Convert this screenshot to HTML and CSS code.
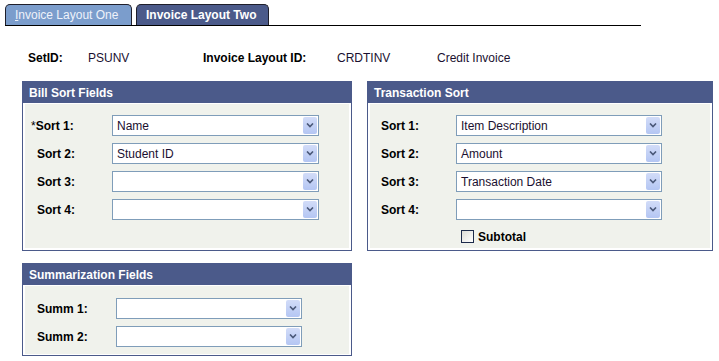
FILE: index.html
```html
<!DOCTYPE html>
<html lang="en">
<head>
  <meta charset="UTF-8">
  <title>Invoice Layout Two</title>
  <link rel="stylesheet" href="styles.css">
</head>
<body>
  <div class="tabs">
    <a class="tab"><u>I</u>nvoice Layout One</a>
    <a class="tab active">Invoice Layout Two</a>
  </div>

  <div class="keys">
    <span class="lbl">SetID:</span>
    <span class="val">PSUNV</span>
    <span class="lbl">Invoice Layout ID:</span>
    <span class="val">CRDTINV</span>
    <span class="val">Credit Invoice</span>
  </div>

  <div class="groups">
    <div class="box bill">
      <div class="box-head">Bill Sort Fields</div>
      <div class="box-body">
        <div class="row"><label><span class="req">*</span>Sort 1:</label><div class="select"><span>Name</span><i class="drop"><svg width="8" height="5" viewBox="0 0 8 5"><path d="M1 0.5 L4 3.5 L7 0.5" fill="none" stroke="#4a5878" stroke-width="1.6"/></svg></i></div></div>
        <div class="row"><label>Sort 2:</label><div class="select"><span>Student ID</span><i class="drop"><svg width="8" height="5" viewBox="0 0 8 5"><path d="M1 0.5 L4 3.5 L7 0.5" fill="none" stroke="#4a5878" stroke-width="1.6"/></svg></i></div></div>
        <div class="row"><label>Sort 3:</label><div class="select"><span></span><i class="drop"><svg width="8" height="5" viewBox="0 0 8 5"><path d="M1 0.5 L4 3.5 L7 0.5" fill="none" stroke="#4a5878" stroke-width="1.6"/></svg></i></div></div>
        <div class="row"><label>Sort 4:</label><div class="select"><span></span><i class="drop"><svg width="8" height="5" viewBox="0 0 8 5"><path d="M1 0.5 L4 3.5 L7 0.5" fill="none" stroke="#4a5878" stroke-width="1.6"/></svg></i></div></div>
      </div>
    </div>

    <div class="box trans">
      <div class="box-head">Transaction Sort</div>
      <div class="box-body">
        <div class="row"><label>Sort 1:</label><div class="select"><span>Item Description</span><i class="drop"><svg width="8" height="5" viewBox="0 0 8 5"><path d="M1 0.5 L4 3.5 L7 0.5" fill="none" stroke="#4a5878" stroke-width="1.6"/></svg></i></div></div>
        <div class="row"><label>Sort 2:</label><div class="select"><span>Amount</span><i class="drop"><svg width="8" height="5" viewBox="0 0 8 5"><path d="M1 0.5 L4 3.5 L7 0.5" fill="none" stroke="#4a5878" stroke-width="1.6"/></svg></i></div></div>
        <div class="row"><label>Sort 3:</label><div class="select"><span>Transaction Date</span><i class="drop"><svg width="8" height="5" viewBox="0 0 8 5"><path d="M1 0.5 L4 3.5 L7 0.5" fill="none" stroke="#4a5878" stroke-width="1.6"/></svg></i></div></div>
        <div class="row"><label>Sort 4:</label><div class="select"><span></span><i class="drop"><svg width="8" height="5" viewBox="0 0 8 5"><path d="M1 0.5 L4 3.5 L7 0.5" fill="none" stroke="#4a5878" stroke-width="1.6"/></svg></i></div></div>
        <div class="check"><span class="box-check"></span>Subtotal</div>
      </div>
    </div>

    <div class="box summ">
      <div class="box-head">Summarization Fields</div>
      <div class="box-body">
        <div class="row"><label>Summ 1:</label><div class="select"><span></span><i class="drop"><svg width="8" height="5" viewBox="0 0 8 5"><path d="M1 0.5 L4 3.5 L7 0.5" fill="none" stroke="#4a5878" stroke-width="1.6"/></svg></i></div></div>
        <div class="row"><label>Summ 2:</label><div class="select"><span></span><i class="drop"><svg width="8" height="5" viewBox="0 0 8 5"><path d="M1 0.5 L4 3.5 L7 0.5" fill="none" stroke="#4a5878" stroke-width="1.6"/></svg></i></div></div>
      </div>
    </div>
  </div>
</body>
</html>
```

FILE: styles.css
```css
body {
  margin: 0;
  background: #fff;
  font-family: 'Liberation Sans', Arial, sans-serif;
  font-size: 12px;
  color: #000;
}

/* tab strip */
.tabs {
  display: flex;
  gap: 4px;
  margin: 4px 0 0 5px;
  width: 636px;
  border-bottom: 1px solid #000;
}
.tab {
  height: 20px;
  line-height: 21px;
  padding: 0 9px;
  border: 1px solid #1e1e2a;
  border-bottom: none;
  border-radius: 5px 5px 0 0;
  background: #7b9dcc;
  color: #eef2fa;
  font-size: 12px;
  width: 107px;
}
.tab u {
  text-decoration: underline;
}
.tab.active {
  background: #4b5a8a;
  color: #fff;
  font-weight: bold;
  width: 113px;
}

/* key fields */
.keys {
  display: grid;
  grid-template-columns: 60px 115px 134px 100px auto;
  padding-left: 28px;
  margin-top: 25px;
  line-height: 14px;
}
.keys .lbl {
  font-weight: bold;
}
.keys .val {
  color: #1a1030;
}

/* group boxes */
.groups {
  display: grid;
  grid-template-columns: 330px 346px;
  grid-template-rows: 170px 93px;
  column-gap: 15px;
  row-gap: 12px;
  margin: 16px 0 0 22px;
}
.box {
  border: 1px solid #4b5a8a;
  background: #fff;
  display: flex;
  flex-direction: column;
}
.box-head {
  background: #4b5a8a;
  color: #fff;
  font-weight: bold;
  height: 21px;
  line-height: 22px;
  padding-left: 6px;
}
.box-body {
  flex: 1;
  background: #f0f2ec;
  margin: 1px 2px 2px 2px;
  padding-top: 11px;
}
.row {
  display: flex;
  align-items: center;
  height: 21px;
  margin-bottom: 7px;
}
.row label {
  font-weight: bold;
  padding-left: 12px;
}
.req {
  margin-left: -6px;
  font-weight: normal;
}
.bill label { width: 75px; }
.trans label { width: 75px; padding-left: 11px; }
.summ label { width: 79px; }
.summ .box-body { padding-top: 12px; }

.select {
  display: flex;
  align-items: center;
  justify-content: space-between;
  box-sizing: border-box;
  height: 21px;
  border: 1px solid #7f9db9;
  background: #fff;
  color: #1a1030;
  padding-left: 4px;
}
.bill .select { width: 207px; }
.trans .select { width: 206px; }
.summ .select { width: 186px; }

.drop {
  display: flex;
  align-items: center;
  justify-content: center;
  width: 14px;
  height: 17px;
  margin-right: 1px;
  border-radius: 2px;
  background: linear-gradient(#d2dcf8, #b4c6f3);
}

.check {
  display: flex;
  align-items: center;
  gap: 4px;
  height: 13px;
  margin-left: 91px;
  margin-top: 10px;
  font-weight: bold;
}
.box-check {
  width: 11px;
  height: 11px;
  border: 1px solid #1c2a4a;
  background: linear-gradient(135deg, #dcdcd6, #fff);
}
```
